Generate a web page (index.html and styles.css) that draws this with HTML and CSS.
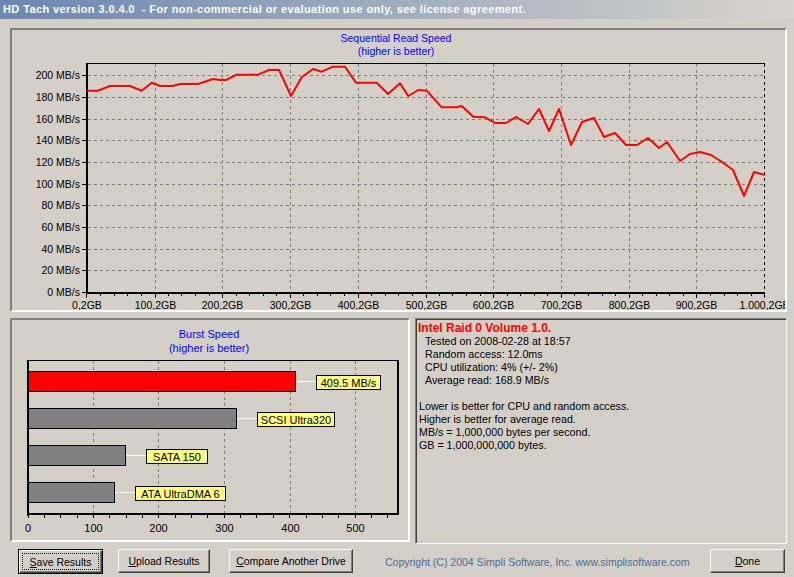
FILE: index.html
```html
<!DOCTYPE html>
<html>
<head>
<meta charset="utf-8">
<title>HD Tach</title>
<link rel="stylesheet" href="styles.css">
</head>
<body>
<div class="window">
  <div class="titlebar">HD Tach version 3.0.4.0&nbsp; - For non-commercial or evaluation use only, see license agreement.</div>
  <div class="content">
    <div class="panel seq-panel">
      <svg class="chart" width="773" height="280" viewBox="12 30 773 280">
        <text class="chart-title seq-title" x="396" y="42" text-anchor="middle">Sequential Read Speed</text>
        <text class="chart-title seq-title" x="396" y="55" text-anchor="middle">(higher is better)</text>
        <path class="grid" d="M88 75.5H764 M88 97.5H764 M88 119.5H764 M88 140.5H764 M88 162.5H764 M88 184.5H764 M88 205.5H764 M88 227.5H764 M88 249.5H764 M88 270.5H764"/>
        <path class="grid" d="M155.5 64V292 M222.5 64V292 M290.5 64V292 M358.5 64V292 M426.5 64V292 M493.5 64V292 M561.5 64V292 M629.5 64V292 M696.5 64V292"/>
        <path class="frame" d="M87 63.5H765"/>
        <path class="frame-dash" d="M764.5 64V292"/>
        <path class="axis" d="M87 63V294 M86 293H765"/>
        <path class="ticks" d="M82 75.5H86 M82 97.5H86 M82 119.5H86 M82 140.5H86 M82 162.5H86 M82 184.5H86 M82 205.5H86 M82 227.5H86 M82 249.5H86 M82 270.5H86 M82 292.5H86"/>
        <path class="ticks" d="M86.5 294V298 M155.5 294V298 M222.5 294V298 M290.5 294V298 M358.5 294V298 M426.5 294V298 M493.5 294V298 M561.5 294V298 M629.5 294V298 M696.5 294V298 M764.5 294V298"/>
        <path class="ticks" d="M100.5 294V296 M114.5 294V296 M127.5 294V296 M141.5 294V296 M168.5 294V296 M181.5 294V296 M195.5 294V296 M209.5 294V296 M236.5 294V296 M249.5 294V296 M263.5 294V296 M276.5 294V296 M303.5 294V296 M317.5 294V296 M330.5 294V296 M344.5 294V296 M371.5 294V296 M385.5 294V296 M398.5 294V296 M412.5 294V296 M439.5 294V296 M452.5 294V296 M466.5 294V296 M480.5 294V296 M507.5 294V296 M520.5 294V296 M534.5 294V296 M547.5 294V296 M574.5 294V296 M588.5 294V296 M602.5 294V296 M615.5 294V296 M642.5 294V296 M656.5 294V296 M669.5 294V296 M683.5 294V296 M710.5 294V296 M724.5 294V296 M737.5 294V296 M751.5 294V296"/>
        <g class="axis-label" text-anchor="end">
          <text x="80" y="79">200 MB/s</text>
          <text x="80" y="101">180 MB/s</text>
          <text x="80" y="123">160 MB/s</text>
          <text x="80" y="144">140 MB/s</text>
          <text x="80" y="166">120 MB/s</text>
          <text x="80" y="188">100 MB/s</text>
          <text x="80" y="209">80 MB/s</text>
          <text x="80" y="231">60 MB/s</text>
          <text x="80" y="253">40 MB/s</text>
          <text x="80" y="274">20 MB/s</text>
          <text x="80" y="296">0 MB/s</text>
        </g>
        <g class="axis-label" text-anchor="middle">
          <text x="87" y="309">0,2GB</text>
          <text x="155.5" y="309">100,2GB</text>
          <text x="222.5" y="309">200,2GB</text>
          <text x="290.5" y="309">300,2GB</text>
          <text x="358.5" y="309">400,2GB</text>
          <text x="426.5" y="309">500,2GB</text>
          <text x="493.5" y="309">600,2GB</text>
          <text x="561.5" y="309">700,2GB</text>
          <text x="629.5" y="309">800,2GB</text>
          <text x="696.5" y="309">900,2GB</text>
          <text x="764.5" y="309">1.000,2GB</text>
        </g>
        <polyline class="read-line" points="87,90.7 97.7,90.7 110,86 130,86 141.7,90.7 151.7,82.7 160,86 172.7,86 180,84 198,84 213,79 220,80 226,80 236.7,74.7 258,74.7 269,70 279,70 291,96 301.7,77.3 313,69 321.7,71.7 333,66.7 345,66.7 356,82.7 376.7,82.7 388,94 400,83.3 408.3,96 418.3,90 426.7,90.7 441.7,107.3 456.7,107.3 461.7,106 473.3,116.7 485,117.3 495,123 506,123 516,117 528,124 539,109 549,131 559,109 571,145 582,122 594,118 604,137 615,133 626,145 637,145 648,138 659,148 667,142 680,161 690,154 700,152 711,155 722,162 733,170 744,196 754,172 765,175"/>
      </svg>
    </div>
    <div class="bottom-row">
      <div class="panel burst-panel">
        <svg class="chart" width="396" height="220" viewBox="12 320 396 220">
          <text class="chart-title burst-title" x="209" y="338" text-anchor="middle">Burst Speed</text>
          <text class="chart-title burst-title" x="209" y="352" text-anchor="middle">(higher is better)</text>
          <path class="grid" d="M93.5 361V513 M158.5 361V513 M224.5 361V513 M290.5 361V513 M355.5 361V513"/>
          <path class="frame" d="M28 360.5H399"/>
          <path class="axis" d="M398 360V515 M28 360V516 M27 514H399"/>
          <path class="ticks" d="M28.5 515V518 M44.5 515V518 M60.5 515V518 M77.5 515V518 M93.5 515V518 M109.5 515V518 M126.5 515V518 M142.5 515V518 M158.5 515V518 M175.5 515V518 M191.5 515V518 M207.5 515V518 M224.5 515V518 M240.5 515V518 M256.5 515V518 M273.5 515V518 M289.5 515V518 M306.5 515V518 M322.5 515V518 M338.5 515V518 M355.5 515V518 M371.5 515V518 M387.5 515V518"/>
          <rect class="bar bar-main" x="28.5" y="371.5" width="267" height="20"/>
          <rect class="bar bar-ref" x="28.5" y="408.5" width="208" height="20"/>
          <rect class="bar bar-ref" x="28.5" y="445.5" width="97" height="20"/>
          <rect class="bar bar-ref" x="28.5" y="482.5" width="86" height="20"/>
          <path class="connector" d="M296 381.5H316 M237 418.5H257 M126 455.5H146 M115 492.5H135"/>
          <rect class="tag" x="316.5" y="375.5" width="64" height="14"/>
          <rect class="tag" x="257.5" y="412.5" width="77" height="14"/>
          <rect class="tag" x="146.5" y="449.5" width="61" height="14"/>
          <rect class="tag" x="135.5" y="486.5" width="90" height="14"/>
          <g class="tag-label" text-anchor="middle">
            <text x="348.5" y="387">409.5 MB/s</text>
            <text x="296" y="424">SCSI Ultra320</text>
            <text x="177" y="461">SATA 150</text>
            <text x="180.5" y="498">ATA UltraDMA 6</text>
          </g>
          <g class="burst-label" text-anchor="middle">
            <text x="28" y="532">0</text>
            <text x="93.5" y="532">100</text>
            <text x="158.5" y="532">200</text>
            <text x="224.5" y="532">300</text>
            <text x="290.5" y="532">400</text>
            <text x="355.5" y="532">500</text>
          </g>
        </svg>
      </div>
      <div class="info-panel">
        <div class="info-title">Intel Raid 0 Volume 1.0.</div>
        <div class="info-stats">
          <div>Tested on 2008-02-28 at 18:57</div>
          <div>Random access: 12.0ms</div>
          <div>CPU utilization: 4% (+/- 2%)</div>
          <div>Average read: 168.9 MB/s</div>
        </div>
        <div class="info-notes">
          <div>Lower is better for CPU and random access.</div>
          <div>Higher is better for average read.</div>
          <div>MB/s = 1,000,000 bytes per second.</div>
          <div>GB = 1,000,000,000 bytes.</div>
        </div>
      </div>
    </div>
    <div class="button-row">
      <button class="btn btn-default btn-save"><span class="focus-rect"><u>S</u>ave Results</span></button>
      <button class="btn btn-upload"><u>U</u>pload Results</button>
      <button class="btn btn-compare"><u>C</u>ompare Another Drive</button>
      <div class="copyright">Copyright (C) 2004 Simpli Software, Inc. www.simplisoftware.com</div>
      <button class="btn btn-done"><u>D</u>one</button>
    </div>
  </div>
</div>
</body>
</html>
```
FILE: styles.css
```css
html, body {
  margin: 0;
  padding: 0;
}
body {
  width: 794px;
  height: 577px;
  overflow: hidden;
  background: #d4d0c8;
  font-family: "Liberation Sans", Arial, sans-serif;
  font-size: 11px;
  color: #000;
}
.window {
  width: 794px;
  height: 577px;
}
.titlebar {
  height: 19px;
  line-height: 19px;
  padding-left: 3px;
  background: linear-gradient(to right, #6a87b2, #d8d4cc);
  color: #fff;
  font-weight: bold;
  font-size: 11px;
  letter-spacing: 0.4px;
  white-space: nowrap;
  overflow: hidden;
}
.content {
  padding: 9px 7px 0 10px;
}
.panel {
  box-sizing: border-box;
  border: 2px solid;
  border-color: #808080 #fff #fff #808080;
  background: #d4d0c8;
  overflow: hidden;
}
.seq-panel {
  width: 777px;
  height: 284px;
}
.chart {
  display: block;
}
.chart text {
  font-family: "Liberation Sans", Arial, sans-serif;
}
.chart-title {
  fill: #0000ff;
}
.seq-title {
  font-size: 10.5px;
}
.burst-title {
  font-size: 11px;
}
.grid {
  fill: none;
  stroke: #808080;
  stroke-width: 1;
  stroke-dasharray: 3 3;
}
.frame {
  fill: none;
  stroke: #000;
  stroke-width: 1;
}
.frame-dash {
  fill: none;
  stroke: #000;
  stroke-width: 1;
  stroke-dasharray: 3 3;
}
.axis {
  fill: none;
  stroke: #000;
  stroke-width: 2;
}
.ticks {
  fill: none;
  stroke: #000;
  stroke-width: 1;
}
.axis-label {
  font-size: 10.5px;
  fill: #000;
}
.read-line {
  fill: none;
  stroke: #ff0000;
  stroke-width: 2;
  stroke-linejoin: round;
}
.bottom-row {
  display: flex;
  align-items: flex-start;
  margin-top: 6px;
}
.burst-panel {
  width: 400px;
  height: 224px;
}
.bar {
  stroke: #000;
  stroke-width: 1;
}
.bar-main {
  fill: #ff0000;
}
.bar-ref {
  fill: #808080;
}
.connector {
  fill: none;
  stroke: #fff;
  stroke-width: 1;
}
.tag {
  fill: #ffff80;
  stroke: #000;
  stroke-width: 1;
}
.tag-label {
  font-size: 11px;
  fill: #000;
}
.burst-label {
  font-size: 11px;
  fill: #000;
}
.info-panel {
  box-sizing: border-box;
  width: 372px;
  height: 226px;
  margin-left: 5px;
  border: 1px solid;
  border-color: #808080 #fff #fff #808080;
  box-shadow: inset 1px 1px 0 #404040, inset -1px -1px 0 #d4d0c8;
  padding: 3px 2px 0 2px;
  line-height: 13px;
  font-size: 10.7px;
}
.info-title {
  color: #ff0000;
  font-weight: bold;
  font-size: 12px;
}
.info-stats {
  padding-left: 7px;
  margin-bottom: 13px;
}
.info-notes {
  padding-left: 1px;
}
.button-row {
  display: flex;
  align-items: flex-start;
  margin-top: 5px;
}
.btn {
  box-sizing: border-box;
  height: 24px;
  margin: 0;
  padding: 0;
  background: #d4d0c8;
  border: 1px solid;
  border-color: #fff #404040 #404040 #fff;
  box-shadow: inset -1px -1px 0 #808080;
  font-family: "Liberation Sans", Arial, sans-serif;
  font-size: 10.5px;
  color: #000;
  display: flex;
  align-items: center;
  justify-content: center;
  white-space: nowrap;
}
.btn u {
  text-decoration: underline;
}
.btn-default {
  border: 1px solid #000;
  box-shadow: inset 1px 1px 0 #fff, inset -1px -1px 0 #404040, inset -2px -2px 0 #808080;
  padding: 3px 3px 3px 3px;
}
.focus-rect {
  box-sizing: border-box;
  flex: 1;
  align-self: stretch;
  border: 1px dotted #000;
  display: flex;
  align-items: center;
  justify-content: center;
}
.btn-save {
  width: 85px;
  height: 25px;
  margin-left: 8px;
}
.btn-upload {
  width: 92px;
  margin-left: 15px;
}
.btn-compare {
  width: 124px;
  margin-left: 19px;
}
.copyright {
  margin-left: 32px;
  line-height: 24px;
  padding-top: 1px;
  color: #4b6b9b;
  font-size: 10.5px;
  white-space: nowrap;
}
.btn-done {
  width: 75px;
  margin-left: auto;
  margin-right: 2px;
}
```
